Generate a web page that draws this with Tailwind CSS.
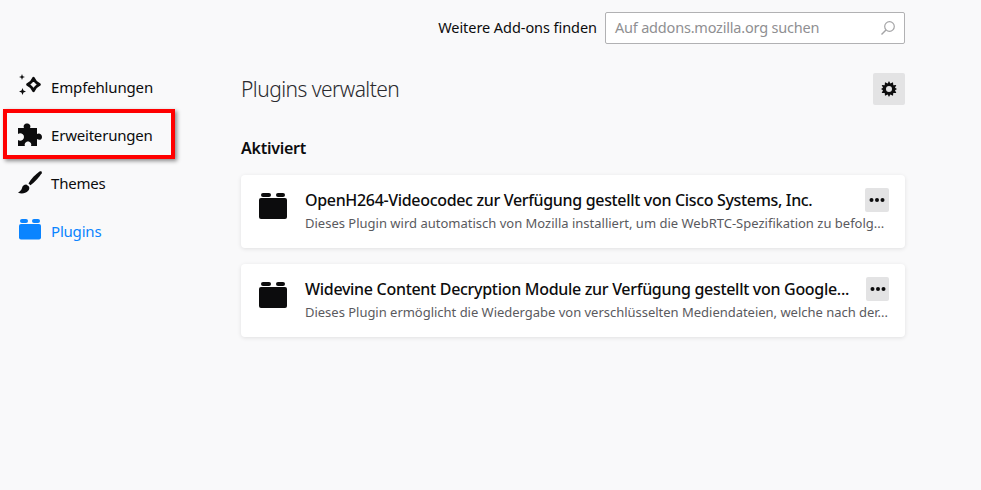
<!DOCTYPE html>
<html lang="de">
<head>
  <meta charset="UTF-8" />
  <title>Add-ons-Verwaltung</title>
  <script src="https://cdn.jsdelivr.net/npm/@tailwindcss/browser@4"></script>
</head>
<body class="bg-[#f9f9fa] h-[490px] w-[981px] overflow-hidden font-['Noto_Sans',sans-serif] text-[#0c0c0d]">
  <div class="flex">
    <!-- sidebar -->
    <nav class="w-[241px] shrink-0 pt-[63px] pl-[3px]">
      <a class="flex items-center h-[46px] w-[172px] pl-[15px] pt-[2px] gap-[9px] text-[15px] tracking-[-0.15px]">
        <svg class="w-6 h-6 -mt-[2px]" viewBox="0 0 24 24" fill="none"><path d="M15.500 4.200c1.200 3 2.700 4.800 6 6.300-3.300 1.500-4.800 3-6 6.300-1.200-3.300-2.700-4.800-6-6.300 3.300-1.500 4.800-3.300 6-6.300z" stroke="#0c0c0d" stroke-width="2.700" stroke-linejoin="round"/><path d="M4 0l.8 2.200L7 3l-2.200.8L4 6l-.8-2.200L1 3l2.200-.8zM4.500 14l1 2.500 2.500 1-2.500 1-1 2.500-1-2.500-2.500-1 2.500-1z" fill="#0c0c0d"/></svg>
        Empfehlungen
      </a>
      <a class="flex items-center h-[50px] w-[172px] pl-[11px] pt-[2px] gap-[9px] text-[15px] tracking-[-0.2px] border-[4px] border-[#f00] shadow-[2px_2px_4px_rgba(0,0,0,0.45)]">
        <svg class="w-6 h-6" viewBox="0 0 24 24" fill="#0c0c0d"><path d="M0 5H6C5 3 6 .5 9 .5S13 3 12 5H19V11C21 9.500 24 11 24 14S21 17.500 19 16V23H13C14 21 12.500 18.500 10 18.500S6 21 7 23H0V17C2 18.500 6 17.500 6 14S2 9.500 0 11Z"/></svg>
        Erweiterungen
      </a>
      <a class="flex items-center h-[48px] w-[172px] pl-[15px] gap-[9px] text-[15px] tracking-[-0.2px]">
        <svg class="w-6 h-6" viewBox="0 0 24 24" fill="#0c0c0d"><path d="M23.500.5c-.5-.5-1.200-.4-2 .1C17.500 3.500 13 8 10.500 12.500l2 1.800C16.500 11.500 21 6.500 23.700 2.300c.3-.7.200-1.300-.2-1.800z"/><path d="M8.300 13.500c-2.300 0-3.800 1.500-4.300 3.500-.4 1.600-1.300 3-4 4.500 3.200 1.700 7.500 1 10.200-1.700 1.300-1.300 1.500-3.200.5-4.500z"/></svg>
        Themes
      </a>
      <a class="flex items-center h-[48px] w-[172px] pl-[15px] gap-[9px] text-[15px] tracking-[-0.2px] text-[#0a84ff]">
        <svg class="w-6 h-6" viewBox="0 0 24 24" fill="#0a84ff"><rect x="2" y="0" width="8" height="4" rx="2"/><rect x="14" y="0" width="8" height="4" rx="2"/><rect x="1" y="5" width="22" height="15.500" rx="2"/></svg>
        Plugins
      </a>
    </nav>

    <!-- main -->
    <main class="w-[664px] shrink-0">
      <div class="flex items-center justify-end h-[55px] gap-2">
        <span class="text-[14.500px] tracking-[-0.06px]">Weitere Add-ons finden</span>
        <div class="flex items-center justify-between w-[300px] h-[32px] mt-[1px] bg-white border border-[#b1b1b3] rounded-[2px] pl-[9px] pr-[8px] text-[14.500px] tracking-[-0.2px] text-[#8f8f92]">
          Auf addons.mozilla.org suchen
          <svg class="w-4 h-4" viewBox="0 0 16 16" fill="none" stroke="#a4a4a6" stroke-width="1.200"><circle cx="9.500" cy="6.500" r="4.800"/><path d="M6 10l-4.500 4.500" stroke-width="1.500"/></svg>
        </div>
      </div>

      <div class="flex items-center justify-between h-[32px] mt-[18px]">
        <h1 class="text-[21px] mt-[1px] font-light tracking-[-0.55px] text-[#2a2a2e]">Plugins verwalten</h1>
        <button class="flex items-center justify-center w-8 h-8 bg-[#e3e3e4] rounded-[2px]">
          <svg class="w-4 h-4" viewBox="0 0 16 16" fill="#0c0c0d"><path fill-rule="evenodd" d="M8 0l1.300 2.600 2.700-1.400.3 3 3-.1-1.300 2.600L16 8l-2 1.300 1.300 2.600-3 .1-.3 2.800-2.700-1.200L8 16l-1.300-2.400L4 14.800l-.3-2.800-3-.1L2 9.300 0 8l2-1.300L.7 4.100l3 .1.300-3 2.700 1.400zM8 5a3 3 0 1 0 0 6 3 3 0 0 0 0-6z"/></svg>
        </button>
      </div>

      <h2 class="mt-[28px] text-[16px] font-semibold tracking-[-0.25px] leading-[30px]">Aktiviert</h2>

      <div class="mt-[12px] flex flex-col gap-[16px]">
        <section class="flex h-[73px] bg-white rounded-[4px] shadow-[0_1px_4px_rgba(12,12,13,0.1)] pl-[18px] pr-4">
          <svg class="w-[28px] h-[28px] mt-[16px] shrink-0" viewBox="0 0 28 28" fill="#0c0c0d"><rect x="2" y="2" width="10" height="4" rx="2"/><rect x="17" y="2" width="9" height="4" rx="2"/><rect y="7" width="28" height="21" rx="2"/></svg>
          <div class="ml-[18px] min-w-0 flex-1">
            <div class="flex items-start justify-between h-[35px]">
              <h3 class="mt-[13px] text-[16px] leading-[24px] font-medium tracking-[-0.33px] whitespace-nowrap">OpenH264-Videocodec zur Verfügung gestellt von Cisco Systems, Inc.</h3>
              <button class="mt-[13px] flex items-center justify-center w-6 h-6 bg-[#e3e3e4] rounded-[2px] shrink-0"><svg class="w-4 h-4" viewBox="0 0 16 16" fill="#0c0c0d"><circle cx="2.500" cy="8" r="2"/><circle cx="8" cy="8" r="2"/><circle cx="13.500" cy="8" r="2"/></svg></button>
            </div>
            <p class="mt-[4px] text-[13px] leading-[18px] text-[#5a5a5e] whitespace-nowrap">Dieses Plugin wird automatisch von Mozilla installiert, um die WebRTC-Spezifikation zu befolg...</p>
          </div>
        </section>
        <section class="flex h-[73px] bg-white rounded-[4px] shadow-[0_1px_4px_rgba(12,12,13,0.1)] pl-[18px] pr-4">
          <svg class="w-[28px] h-[28px] mt-[16px] shrink-0" viewBox="0 0 28 28" fill="#0c0c0d"><rect x="2" y="2" width="10" height="4" rx="2"/><rect x="17" y="2" width="9" height="4" rx="2"/><rect y="7" width="28" height="21" rx="2"/></svg>
          <div class="ml-[18px] min-w-0 flex-1">
            <div class="flex items-start justify-between h-[35px]">
              <h3 class="mt-[13px] text-[16px] leading-[24px] font-medium tracking-[-0.3px] whitespace-nowrap">Widevine Content Decryption Module zur Verfügung gestellt von Google...</h3>
              <button class="mt-[13px] flex items-center justify-center w-[23px] h-6 bg-[#e3e3e4] rounded-[2px] shrink-0"><svg class="w-4 h-4" viewBox="0 0 16 16" fill="#0c0c0d"><circle cx="2.500" cy="8" r="2"/><circle cx="8" cy="8" r="2"/><circle cx="13.500" cy="8" r="2"/></svg></button>
            </div>
            <p class="mt-[4px] text-[13px] leading-[18px] tracking-[-0.02px] text-[#5a5a5e] whitespace-nowrap">Dieses Plugin ermöglicht die Wiedergabe von verschlüsselten Mediendateien, welche nach der...</p>
          </div>
        </section>
      </div>
    </main>
  </div>
</body>
</html>
